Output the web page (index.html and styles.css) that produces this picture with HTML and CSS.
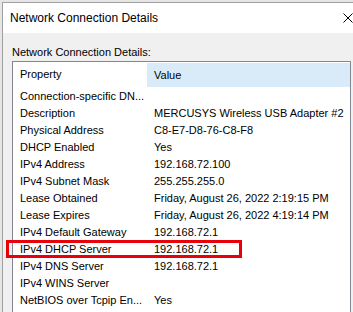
FILE: index.html
```html
<!DOCTYPE html>
<html lang="en">
<head>
  <meta charset="UTF-8">
  <title>Network Connection Details</title>
  <link rel="stylesheet" href="styles.css">
</head>
<body>
  <div class="window">
    <div class="titlebar">
      <span class="title">Network Connection Details</span>
      <svg class="close" width="10" height="10" viewBox="0 0 10 10">
        <path d="M0.5 0.5 L9.5 9.5 M9.5 0.5 L0.5 9.5" stroke="#000" stroke-width="1"/>
      </svg>
    </div>
    <div class="content">
      <div class="label">Network Connection Details:</div>
      <div class="list">
        <div class="row head">
          <div class="prop">Property</div>
          <div class="val">Value</div>
        </div>
        <div class="row"><div class="prop">Connection-specific DN...</div><div class="val"></div></div>
        <div class="row"><div class="prop">Description</div><div class="val">MERCUSYS Wireless USB Adapter #2</div></div>
        <div class="row"><div class="prop">Physical Address</div><div class="val">C8-E7-D8-76-C8-F8</div></div>
        <div class="row"><div class="prop">DHCP Enabled</div><div class="val">Yes</div></div>
        <div class="row"><div class="prop">IPv4 Address</div><div class="val">192.168.72.100</div></div>
        <div class="row"><div class="prop">IPv4 Subnet Mask</div><div class="val">255.255.255.0</div></div>
        <div class="row"><div class="prop">Lease Obtained</div><div class="val">Friday, August 26, 2022 2:19:15 PM</div></div>
        <div class="row"><div class="prop">Lease Expires</div><div class="val">Friday, August 26, 2022 4:19:14 PM</div></div>
        <div class="row"><div class="prop">IPv4 Default Gateway</div><div class="val">192.168.72.1</div></div>
        <div class="row marked"><div class="prop">IPv4 DHCP Server</div><div class="val">192.168.72.1</div></div>
        <div class="row"><div class="prop">IPv4 DNS Server</div><div class="val">192.168.72.1</div></div>
        <div class="row"><div class="prop">IPv4 WINS Server</div><div class="val"></div></div>
        <div class="row"><div class="prop">NetBIOS over Tcpip En...</div><div class="val">Yes</div></div>
      </div>
    </div>
  </div>
</body>
</html>
```

FILE: styles.css
```css
html, body {
  height: 100%;
}
body {
  margin: 0;
  background: #e6e6e6;
  font-family: "Liberation Sans", Arial, sans-serif;
  color: #000;
  overflow: hidden;
}
.window {
  margin: 2px 0 0 2px;
  border-top: 1px solid #a0a0a0;
  border-left: 1px solid #a0a0a0;
}
.titlebar {
  height: 30px;
  background: #fff;
  display: flex;
  align-items: center;
  justify-content: space-between;
  padding: 0 0 0 7px;
}
.title {
  font-size: 12px;
}
.content {
  background: #f0f0f0;
  padding: 12px 2px 0 9px;
  height: 279px;
  box-sizing: border-box;
  overflow: hidden;
}
.label {
  font-size: 11px;
  line-height: 14px;
  margin-bottom: 2px;
}
.list {
  background: #fff;
  border: 1px solid #828790;
  height: 260px;
  font-size: 11px;
}
.row {
  display: flex;
  height: 17px;
  line-height: 17px;
  position: relative;
}
.row .prop {
  width: 127px;
  padding-left: 7px;
  white-space: nowrap;
}
.row .val {
  flex: 1;
  padding-left: 7px;
  white-space: nowrap;
}
.row.head {
  height: 26px;
  line-height: 25px;
}
.row.head .val {
  background: #d9ebf9;
  margin-top: 1px;
  height: 24px;
  line-height: 24px;
}
.row.marked::after {
  content: "";
  position: absolute;
  left: -7px;
  top: -1px;
  width: 230px;
  height: 12px;
  border: 3px solid #e8000b;
}
```
